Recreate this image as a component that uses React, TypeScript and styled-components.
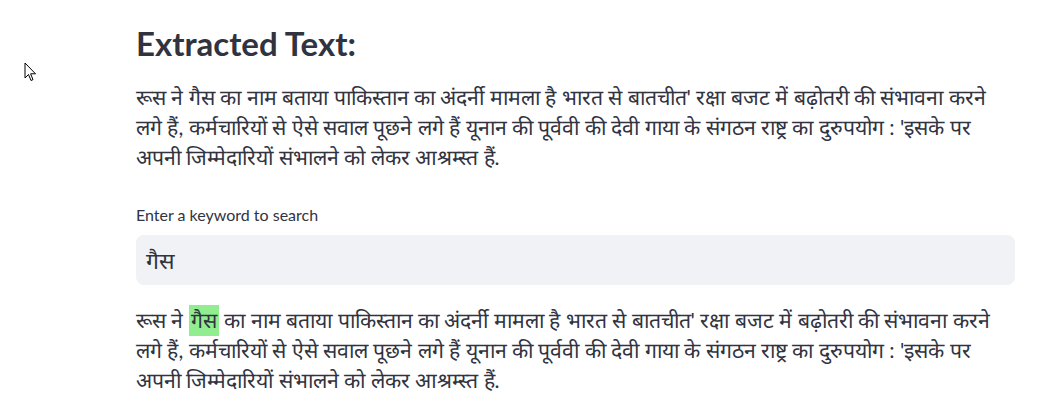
import React from "react";
import styled, { createGlobalStyle } from "styled-components";

const Global = createGlobalStyle`
  html, body { margin: 0; padding: 0; background: #ffffff; }
  body { font-family: "Lato", "Noto Sans", sans-serif; color: #31333f; }
`;

const Page = styled.div`
  position: relative;
  width: 1042px;
  height: 402px;
  overflow: hidden;
  background: #ffffff;
`;

const Main = styled.main`
  display: flex;
  flex-direction: column;
  width: 879px;
  padding: 21px 0 0 136px;
`;

const Heading = styled.h2`
  margin: 0;
  font-family: "Lato", sans-serif;
  font-weight: 700;
  font-size: 33px;
  line-height: 44px;
  color: #31333f;
`;

const Paragraph = styled.p<{ $top: number }>`
  margin: ${(p) => p.$top}px 0 0 0;
  font-family: "Lato", sans-serif;
  font-size: 21.2px;
  line-height: 30px;
  color: #31333f;
`;

const Label = styled.label`
  display: block;
  margin-top: 33px;
  font-family: "Lato", sans-serif;
  font-size: 16px;
  line-height: 20px;
  color: #31333f;
`;

const InputBox = styled.div`
  display: flex;
  align-items: center;
  margin-top: 10px;
  height: 50px;
  padding: 0 10px;
  border-radius: 8px;
  background: #f0f2f6;
  font-size: 23px;
  color: #31333f;
`;

const Mark = styled.mark`
  background: #90ee90;
  color: inherit;
  padding: 2px 2px 3px;
`;

const Cursor = styled.svg`
  position: absolute;
  left: 24px;
  top: 62px;
`;

const before = "रूस ने ";
const keyword = "गैस";
const after =
  " का नाम बताया पाकिस्तान का अंदर्नी मामला है भारत से बातचीत' रक्षा बजट में बढ़ोतरी की संभावना करने लगे हैं, कर्मचारियों से ऐसे सवाल पूछने लगे हैं यूनान की पूर्ववी की देवी गाया के संगठन राष्ट्र का दुरुपयोग : 'इसके पर अपनी जिम्मेदारियों संभालने को लेकर आश्रम्स्त हैं.";

export default function App() {
  return (
    <Page>
      <Global />
      <Cursor width="13" height="20" viewBox="0 0 13 20">
        <path d="M1 1 L1 16 L4.5 12.5 L7 18.5 L9 17.6 L6.6 11.8 L11.5 11.8 Z" fill="#ffffff" stroke="#000000" strokeWidth="1" strokeLinejoin="miter" />
      </Cursor>
      <Main>
        <Heading>Extracted Text:</Heading>
        <Paragraph $top={17}>{before + keyword + after}</Paragraph>
        <Label>Enter a keyword to search</Label>
        <InputBox>{keyword}</InputBox>
        <Paragraph $top={20}>
          {before}
          <Mark>{keyword}</Mark>
          {after}
        </Paragraph>
      </Main>
    </Page>
  );
}
